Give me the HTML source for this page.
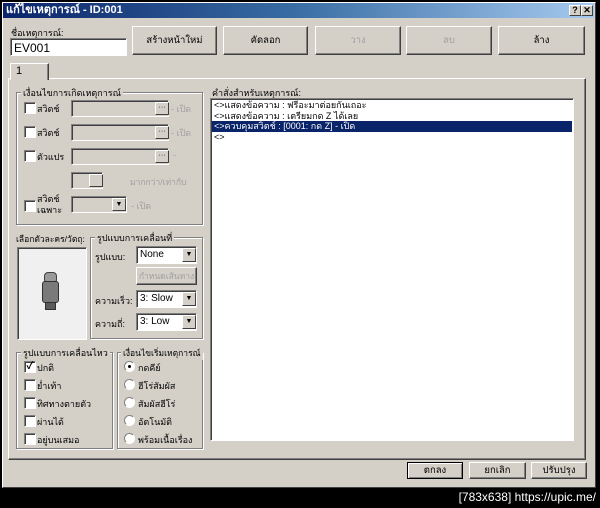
<!DOCTYPE html><html><head><meta charset="utf-8"><style>
*{box-sizing:border-box;margin:0;padding:0}
body{width:600px;height:508px;background:#000;position:relative;overflow:hidden;font-family:"Liberation Sans","Noto Sans CJK SC",sans-serif;font-size:11px;color:#000}
.a{position:absolute;white-space:nowrap}
.win{left:2px;top:2px;width:594px;height:486px;background:#d4d0c8;border:1px solid #fff;border-right-color:#404040;border-bottom-color:#404040}
.title{left:3px;top:3px;width:591px;height:15px;background:linear-gradient(90deg,#0a246a,#3a6ea5 50%,#a6caf0);color:#fff;font-weight:bold;font-size:11px;line-height:15px;padding-left:3px}
.tb{width:12px;height:11px;top:5px;background:#d4d0c8;border:1px solid #fff;border-right-color:#404040;border-bottom-color:#404040;font-size:9px;font-weight:bold;text-align:center;line-height:9px}
.btn{background:#d4d0c8;border:1px solid #fff;border-right-color:#404040;border-bottom-color:#404040;box-shadow:inset -1px -1px 0 #808080;text-align:center;font-size:9.5px}
.dis{color:#a0a0a0}
.sunk{background:#fff;border:1px solid #808080;border-right-color:#fff;border-bottom-color:#fff;box-shadow:inset 1px 1px 0 #404040}
.sunkd{background:#d4d0c8;border:1px solid #808080;border-right-color:#fff;border-bottom-color:#fff;box-shadow:inset 1px 1px 0 #404040}
.grp{border:1px solid #808080;box-shadow:1px 1px 0 #fff,inset 1px 1px 0 #fff}
.gl{background:#d4d0c8;padding:0 2px;font-size:9px}
.cb{width:12px;height:12px;background:#fff;border:1px solid #808080;border-right-color:#fff;border-bottom-color:#fff;box-shadow:inset 1px 1px 0 #404040;font-size:10px;line-height:10px;text-align:center;font-weight:bold}
.rb{width:11px;height:11px;border-radius:50%;background:#fff;border:1px solid #808080;border-right-color:#fff;border-bottom-color:#fff}
.t{font-size:9px}
.dd{width:14px;background:#d4d0c8;border:1px solid #fff;border-right-color:#404040;border-bottom-color:#404040;font-size:7px;text-align:center}
</style></head><body>
<div class="a win"></div>
<div class="a title">แก้ไขเหตุการณ์ - ID:001</div>
<div class="a tb" style="left:569px">?</div>
<div class="a tb" style="left:581px">✕</div>

<div class="a t" style="left:11px;top:26px">ชื่อเหตุการณ์:</div>
<div class="a sunk" style="left:10px;top:38px;width:117px;height:18px;font-size:12px;padding:2px 3px">EV001</div>
<div class="a btn" style="left:132px;top:26px;width:85px;height:29px;line-height:27px">สร้างหน้าใหม่</div>
<div class="a btn" style="left:223px;top:26px;width:85px;height:29px;line-height:27px">คัดลอก</div>
<div class="a btn dis" style="left:315px;top:26px;width:86px;height:29px;line-height:27px">วาง</div>
<div class="a btn dis" style="left:406px;top:26px;width:86px;height:29px;line-height:27px">ลบ</div>
<div class="a btn" style="left:498px;top:26px;width:87px;height:29px;line-height:27px">ล้าง</div>

<div class="a" style="left:8px;top:78px;width:578px;height:382px;border:1px solid #fff;border-right-color:#404040;border-bottom-color:#404040;box-shadow:inset -1px -1px 0 #808080"></div>
<div class="a" style="left:10px;top:63px;width:39px;height:17px;background:#d4d0c8;border:1px solid #fff;border-bottom:none;border-right-color:#404040;box-shadow:inset -1px 0 0 #808080;padding-left:5px;line-height:14px">1</div>

<div class="a grp" style="left:16px;top:92px;width:187px;height:133px"></div>
<div class="a gl" style="left:21px;top:86px">เงื่อนไขการเกิดเหตุการณ์</div>
<div class="a cb" style="left:24px;top:102px"></div><div class="a t" style="left:37px;top:102px">สวิตช์</div>
<div class="a sunkd" style="left:71px;top:100px;width:98px;height:17px"></div><div class="a dd" style="left:155px;top:102px;height:13px;line-height:9px">···</div><div class="a t dis" style="left:171px;top:102px">- เปิด</div>
<div class="a cb" style="left:24px;top:126px"></div><div class="a t" style="left:37px;top:126px">สวิตช์</div>
<div class="a sunkd" style="left:71px;top:124px;width:98px;height:17px"></div><div class="a dd" style="left:155px;top:126px;height:13px;line-height:9px">···</div><div class="a t dis" style="left:171px;top:126px">- เปิด</div>
<div class="a cb" style="left:24px;top:150px"></div><div class="a t" style="left:37px;top:150px">ตัวแปร</div>
<div class="a sunkd" style="left:71px;top:148px;width:98px;height:17px"></div><div class="a dd" style="left:155px;top:150px;height:13px;line-height:9px">···</div><div class="a t dis" style="left:173px;top:150px">-</div>
<div class="a sunkd" style="left:71px;top:172px;width:32px;height:17px"></div><div class="a dd" style="left:89px;top:174px;height:13px"></div><div class="a t dis" style="left:130px;top:175px;font-size:8.5px">มากกว่า/เท่ากับ</div>
<div class="a cb" style="left:24px;top:200px"></div><div class="a t" style="left:37px;top:194px;line-height:11px">สวิตช์<br>เฉพาะ</div>
<div class="a sunkd" style="left:71px;top:196px;width:56px;height:17px"></div><div class="a dd" style="left:112px;top:198px;height:13px;line-height:11px">▼</div><div class="a t dis" style="left:131px;top:199px">- เปิด</div>

<div class="a t" style="left:16px;top:232px;font-size:8.5px">เลือกตัวละคร/วัตถุ:</div>
<div class="a sunk" style="left:17px;top:247px;width:70px;height:93px;background:#f0f0f0"></div>
<div class="a" style="left:44px;top:272px;width:13px;height:10px;background:#9a9a9a;border-radius:4px 4px 2px 2px;border:1px solid #404040"></div>
<div class="a" style="left:42px;top:281px;width:17px;height:22px;background:#7a7a7a;border-radius:3px;border:1px solid #303030"></div>
<div class="a" style="left:45px;top:302px;width:11px;height:8px;background:#5a5a5a;border:1px solid #303030"></div>
<div class="a grp" style="left:90px;top:237px;width:113px;height:102px"></div>
<div class="a gl" style="left:95px;top:231px">รูปแบบการเคลื่อนที่</div>
<div class="a t" style="left:95px;top:250px">รูปแบบ:</div>
<div class="a sunk" style="left:136px;top:246px;width:61px;height:18px;font-size:10px;padding:2px 3px">None</div><div class="a dd" style="left:182px;top:248px;height:14px;line-height:12px">▼</div>
<div class="a btn dis" style="left:136px;top:267px;width:61px;height:18px;line-height:16px;font-size:8.5px">กำหนดเส้นทาง</div>
<div class="a t" style="left:95px;top:294px">ความเร็ว:</div>
<div class="a sunk" style="left:136px;top:290px;width:61px;height:18px;font-size:10px;padding:2px 3px">3: Slow</div><div class="a dd" style="left:182px;top:292px;height:14px;line-height:12px">▼</div>
<div class="a t" style="left:95px;top:317px">ความถี่:</div>
<div class="a sunk" style="left:136px;top:313px;width:61px;height:18px;font-size:10px;padding:2px 3px">3: Low</div><div class="a dd" style="left:182px;top:315px;height:14px;line-height:12px">▼</div>

<div class="a grp" style="left:16px;top:352px;width:97px;height:97px"></div>
<div class="a gl" style="left:21px;top:346px">รูปแบบการเคลื่อนไหว</div>
<div class="a cb" style="left:24px;top:361px">✓</div><div class="a t" style="left:37px;top:361px">ปกติ</div>
<div class="a cb" style="left:24px;top:379px"></div><div class="a t" style="left:37px;top:379px">ย่ำเท้า</div>
<div class="a cb" style="left:24px;top:397px"></div><div class="a t" style="left:37px;top:397px">ทิศทางตายตัว</div>
<div class="a cb" style="left:24px;top:415px"></div><div class="a t" style="left:37px;top:415px">ผ่านได้</div>
<div class="a cb" style="left:24px;top:433px"></div><div class="a t" style="left:37px;top:433px">อยู่บนเสมอ</div>

<div class="a grp" style="left:117px;top:352px;width:86px;height:97px"></div>
<div class="a gl" style="left:121px;top:346px;font-size:8.5px">เงื่อนไขเริ่มเหตุการณ์</div>
<div class="a rb" style="left:124px;top:361px"><div class="a" style="left:3px;top:3px;width:3px;height:3px;background:#000;border-radius:50%"></div></div><div class="a t" style="left:138px;top:361px">กดคีย์</div>
<div class="a rb" style="left:124px;top:379px"></div><div class="a t" style="left:138px;top:379px">ฮีโร่สัมผัส</div>
<div class="a rb" style="left:124px;top:397px"></div><div class="a t" style="left:138px;top:397px">สัมผัสฮีโร่</div>
<div class="a rb" style="left:124px;top:415px"></div><div class="a t" style="left:138px;top:415px">อัตโนมัติ</div>
<div class="a rb" style="left:124px;top:433px"></div><div class="a t" style="left:138px;top:433px">พร้อมเนื้อเรื่อง</div>

<div class="a t" style="left:212px;top:86px">คำสั่งสำหรับเหตุการณ์:</div>
<div class="a sunk" style="left:210px;top:98px;width:364px;height:343px"></div>
<div class="a t" style="left:214px;top:100px;line-height:11px">&lt;&gt;แสดงข้อความ : ฟรีอะมาต่อยกันเถอะ</div>
<div class="a t" style="left:214px;top:111px;line-height:11px">&lt;&gt;แสดงข้อความ : เตรียมกด Z ได้เลย</div>
<div class="a t" style="left:212px;top:121px;width:360px;height:11px;background:#0a246a;color:#fff;line-height:11px;padding-left:2px">&lt;&gt;ควบคุมสวิตช์ : [0001: กด Z] - เปิด</div>
<div class="a t" style="left:214px;top:132px;line-height:11px">&lt;&gt;</div>

<div class="a btn" style="left:407px;top:462px;width:56px;height:17px;line-height:15px;border-color:#000;box-shadow:inset 1px 1px 0 #fff,inset -1px -1px 0 #808080">ตกลง</div>
<div class="a btn" style="left:469px;top:462px;width:57px;height:17px;line-height:15px">ยกเลิก</div>
<div class="a btn" style="left:531px;top:462px;width:56px;height:17px;line-height:15px">ปรับปรุง</div>

<div class="a" style="right:4px;top:490px;color:#fff;font-family:'Liberation Sans',sans-serif;font-size:12px;line-height:14px">[783x638] https://upic.me/</div>
</body></html>
